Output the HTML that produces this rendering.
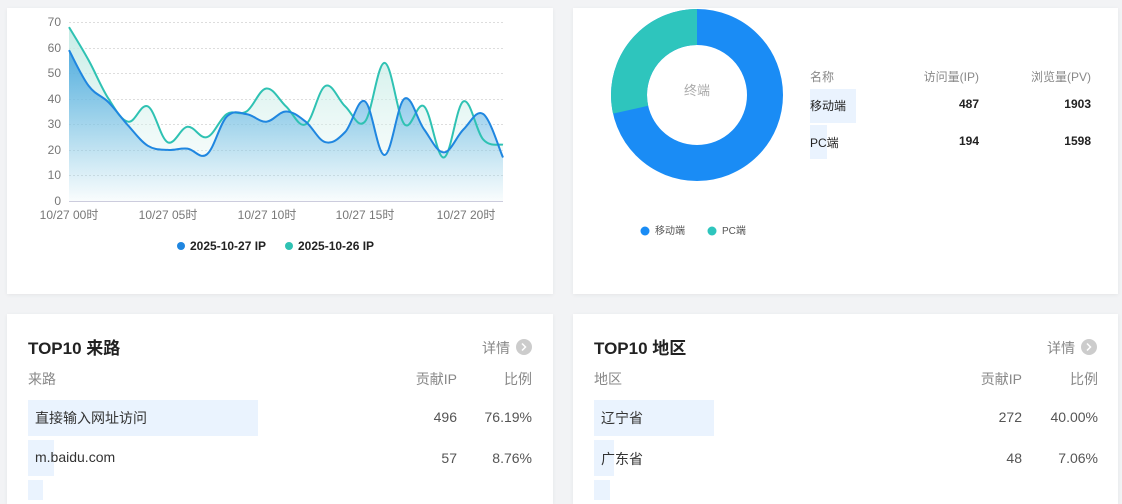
<!DOCTYPE html>
<html><head><meta charset="utf-8"><style>
body{margin:0;width:1122px;height:491px;overflow:hidden;background:#f2f3f5;font-family:"Liberation Sans","Noto Sans CJK SC",sans-serif;position:relative}
.card{position:absolute;background:#fff;box-shadow:0 1px 4px rgba(0,0,0,0.06)}
.t{position:absolute;white-space:nowrap}
.bar{position:absolute;background:#eaf3fe}
</style></head><body>
<div class="card" style="left:7px;top:8px;width:546px;height:286px"></div>
<div class="card" style="left:573px;top:8px;width:545px;height:286px"></div>
<div class="card" style="left:7px;top:314px;width:546px;height:190px"></div>
<div class="card" style="left:573px;top:314px;width:545px;height:190px"></div>

<svg width="1122" height="491" style="position:absolute;left:0;top:0" id="sv">
<defs>
<linearGradient id="gb" x1="0" y1="0" x2="0" y2="1"><stop offset="0" stop-color="#4aa8df" stop-opacity=".9"/><stop offset="1" stop-color="#5ab2e2" stop-opacity=".02"/></linearGradient>
<linearGradient id="gg" x1="0" y1="0" x2="0" y2="1"><stop offset="0" stop-color="#bfeae3" stop-opacity=".9"/><stop offset="1" stop-color="#e6f6f3" stop-opacity=".1"/></linearGradient>
</defs>
<g stroke="#ddd" stroke-dasharray="2 2" stroke-width="1">
<line x1="69" x2="503" y1="22.5" y2="22.5"/><line x1="69" x2="503" y1="48.5" y2="48.5"/><line x1="69" x2="503" y1="73.5" y2="73.5"/><line x1="69" x2="503" y1="99.5" y2="99.5"/><line x1="69" x2="503" y1="124.5" y2="124.5"/><line x1="69" x2="503" y1="150.5" y2="150.5"/><line x1="69" x2="503" y1="175.5" y2="175.5"/>
</g>
<line x1="69" x2="503" y1="201.5" y2="201.5" stroke="#ccd" />
<g font-size="12" fill="#777" text-anchor="end">
<text x="61" y="26">70</text><text x="61" y="52">60</text><text x="61" y="77">50</text><text x="61" y="103">40</text><text x="61" y="128">30</text><text x="61" y="154">20</text><text x="61" y="179">10</text><text x="61" y="205">0</text>
</g>
<g font-size="12" fill="#777" text-anchor="middle">
<text x="69" y="219">10/27 00时</text><text x="168" y="219">10/27 05时</text><text x="267" y="219">10/27 10时</text><text x="365" y="219">10/27 15时</text><text x="466" y="219">10/27 20时</text>
</g>
<path id="gf" fill="url(#gg)" d=""/>
<path id="bf" fill="url(#gb)" d=""/>
<path id="gl" fill="none" stroke="#2fc2b3" stroke-width="2" d=""/>
<path id="bl" fill="none" stroke="#1f86e0" stroke-width="2" d=""/>
<circle cx="181" cy="246" r="4" fill="#1f86e0"/><circle cx="289" cy="246" r="4" fill="#2fc2b3"/>
<g font-size="12" font-weight="bold" fill="#222"><text x="190" y="250">2025-10-27 IP</text><text x="298" y="250">2025-10-26 IP</text></g>

<circle cx="697" cy="95" r="68" fill="none" stroke="#1a8cf5" stroke-width="36"/>
<circle cx="697" cy="95" r="68" fill="none" stroke="#2ec5bd" stroke-width="36" stroke-dasharray="121.8 427.3" stroke-dashoffset="-305.5" transform="rotate(-90 697 95)"/>
<text x="697" y="95" font-size="13" fill="#aaa" text-anchor="middle">终端</text>
<circle cx="645" cy="231" r="4.5" fill="#1a8cf5"/><circle cx="712" cy="231" r="4.5" fill="#2ec5bd"/>
<g font-size="10" fill="#555"><text x="655" y="234">移动端</text><text x="722" y="234">PC端</text></g>
<circle cx="524" cy="347" r="8" fill="#ccc"/><path d="M522 343.5l3.5 3.5-3.5 3.5" stroke="#fff" stroke-width="1.5" fill="none"/>
<circle cx="1089" cy="347" r="8" fill="#ccc"/><path d="M1087 343.5l3.5 3.5-3.5 3.5" stroke="#fff" stroke-width="1.5" fill="none"/>
</svg>

<div class="bar" style="left:810px;top:89px;width:46px;height:34px"></div>
<div class="bar" style="left:810px;top:125px;width:17px;height:34px"></div>
<div class="t" style="left:810px;top:68px;font-size:12px;color:#888">名称</div>
<div class="t" style="right:143px;top:68px;font-size:12px;color:#888">访问量(IP)</div>
<div class="t" style="right:31px;top:68px;font-size:12px;color:#888">浏览量(PV)</div>
<div class="t" style="left:810px;top:97px;font-size:12px;color:#222">移动端</div>
<div class="t" style="right:143px;top:97px;font-size:12px;color:#222;font-weight:bold">487</div>
<div class="t" style="right:31px;top:97px;font-size:12px;color:#222;font-weight:bold">1903</div>
<div class="t" style="left:810px;top:134px;font-size:12px;color:#222">PC端</div>
<div class="t" style="right:143px;top:134px;font-size:12px;color:#222;font-weight:bold">194</div>
<div class="t" style="right:31px;top:134px;font-size:12px;color:#222;font-weight:bold">1598</div>

<div class="bar" style="left:28px;top:400px;width:230px;height:36px"></div>
<div class="bar" style="left:28px;top:440px;width:26px;height:36px"></div>
<div class="bar" style="left:28px;top:480px;width:15px;height:20px"></div>
<div class="t" style="left:28px;top:334px;font-size:17px;font-weight:bold;color:#222">TOP10 来路</div>
<div class="t" style="left:482px;top:338px;font-size:14px;color:#888">详情</div>
<div class="t" style="left:28px;top:369px;font-size:14px;color:#888">来路</div>
<div class="t" style="right:665px;top:369px;font-size:14px;color:#888">贡献IP</div>
<div class="t" style="right:590px;top:369px;font-size:14px;color:#888">比例</div>
<div class="t" style="left:35px;top:408px;font-size:14px;color:#333">直接输入网址访问</div>
<div class="t" style="right:665px;top:409px;font-size:14px;color:#555">496</div>
<div class="t" style="right:590px;top:409px;font-size:14px;color:#555">76.19%</div>
<div class="t" style="left:35px;top:449px;font-size:14px;color:#333">m.baidu.com</div>
<div class="t" style="right:665px;top:450px;font-size:14px;color:#555">57</div>
<div class="t" style="right:590px;top:450px;font-size:14px;color:#555">8.76%</div>

<div class="bar" style="left:594px;top:400px;width:120px;height:36px"></div>
<div class="bar" style="left:594px;top:440px;width:20px;height:36px"></div>
<div class="bar" style="left:594px;top:480px;width:16px;height:20px"></div>
<div class="t" style="left:594px;top:334px;font-size:17px;font-weight:bold;color:#222">TOP10 地区</div>
<div class="t" style="left:1047px;top:338px;font-size:14px;color:#888">详情</div>
<div class="t" style="left:594px;top:369px;font-size:14px;color:#888">地区</div>
<div class="t" style="right:100px;top:369px;font-size:14px;color:#888">贡献IP</div>
<div class="t" style="right:24px;top:369px;font-size:14px;color:#888">比例</div>
<div class="t" style="left:601px;top:408px;font-size:14px;color:#333">辽宁省</div>
<div class="t" style="right:100px;top:409px;font-size:14px;color:#555">272</div>
<div class="t" style="right:24px;top:409px;font-size:14px;color:#555">40.00%</div>
<div class="t" style="left:601px;top:449px;font-size:14px;color:#333">广东省</div>
<div class="t" style="right:100px;top:450px;font-size:14px;color:#555">48</div>
<div class="t" style="right:24px;top:450px;font-size:14px;color:#555">7.06%</div>

<script>
var B=[59,45,38.6,29.5,21.6,20,20.5,18.3,33,34,31,35,31,23,27,39,18,40,28,19,28,34,17];
var G=[68,55,40,31,37,23,29,25,34,35,44,37,30,45,37,31,54,30,37,17,39,24,22];
function pts(a){return a.map(function(v,i){return [69+i*19.727,201-v*2.557];});}
function smooth(p){var d="M"+p[0][0]+" "+p[0][1];for(var i=0;i<p.length-1;i++){var p0=p[i-1]||p[i],p1=p[i],p2=p[i+1],p3=p[i+2]||p2;var t=0.18;
var c1=[p1[0]+(p2[0]-p0[0])*t,p1[1]+(p2[1]-p0[1])*t],c2=[p2[0]-(p3[0]-p1[0])*t,p2[1]-(p3[1]-p1[1])*t];
d+=" C"+c1[0].toFixed(1)+" "+c1[1].toFixed(1)+" "+c2[0].toFixed(1)+" "+c2[1].toFixed(1)+" "+p2[0].toFixed(1)+" "+p2[1].toFixed(1);}return d;}
var b=smooth(pts(B)),g=smooth(pts(G));
document.getElementById("bl").setAttribute("d",b);document.getElementById("gl").setAttribute("d",g);
document.getElementById("bf").setAttribute("d",b+" L503 201 L69 201Z");document.getElementById("gf").setAttribute("d",g+" L503 201 L69 201Z");
</script>
</body></html>
